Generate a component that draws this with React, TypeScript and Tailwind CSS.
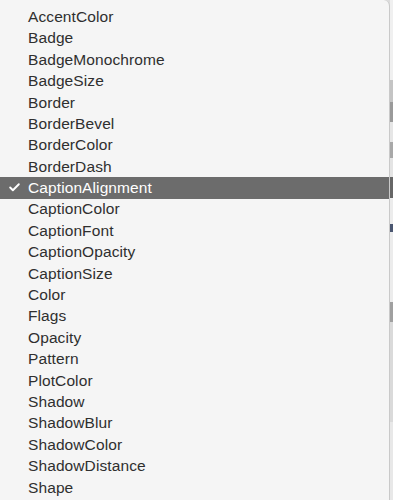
import { Check } from 'lucide-react';

const ITEMS = [
    'AccentColor', 'Badge', 'BadgeMonochrome', 'BadgeSize', 'Border', 'BorderBevel', 'BorderColor', 'BorderDash',
    'CaptionAlignment', 'CaptionColor', 'CaptionFont', 'CaptionOpacity', 'CaptionSize', 'Color', 'Flags', 'Opacity',
    'Pattern', 'PlotColor', 'Shadow', 'ShadowBlur', 'ShadowColor', 'ShadowDistance', 'Shape'
];

const SELECTED = 'CaptionAlignment';

export default function App() {
    return (
        <div className="flex h-[500px] w-[393px] overflow-hidden bg-[#dcdcdc]" style={{ fontFamily: '"Liberation Sans", Arial, sans-serif' }}>
            {/* Popup menu */}
            <div className="w-[390px] shrink-0 rounded-tr-[6px] border-r border-[#c9c9c9] bg-[#f5f5f5] pt-[6px]">
                {ITEMS.map((item) => {
                    const active = item === SELECTED;
                    return (
                        <div
                            key={item}
                            className={`flex h-[21.4px] items-center text-[15.5px] leading-none ${active ? 'bg-[#6c6c6c] text-white' : 'text-[#2f2f2f]'}`}
                        >
                            <div className="flex w-[28px] shrink-0 items-center justify-center pl-[1px]">
                                {active && <Check className="h-[13px] w-[13px]" strokeWidth={3.5} />}
                            </div>
                            <span className="tracking-[0.1px]">{item}</span>
                        </div>
                    );
                })}
            </div>

            {/* Window behind, peeking out */}
            <div className="flex flex-1 flex-col">
                <div className="h-[80px] bg-[#f0f0f0]" />
                <div className="h-[22px] bg-[#c4c4c4]" />
                <div className="h-[20px] bg-[#9a9a9a]" />
                <div className="h-[20px] bg-[#e6e6e6]" />
                <div className="h-[16px] bg-[#a8a8a8]" />
                <div className="h-[19px] bg-[#e4e4e4]" />
                <div className="h-[21px] bg-[#666666]" />
                <div className="h-[26px] bg-[#ececec]" />
                <div className="h-[8px] bg-[#4a5670]" />
                <div className="h-[70px] bg-[#ececec]" />
                <div className="h-[20px] bg-[#a0a0a0]" />
                <div className="h-[100px] bg-[#dadada]" />
                <div className="flex-1 bg-[#e8e8e8]" />
            </div>
        </div>
    );
}
